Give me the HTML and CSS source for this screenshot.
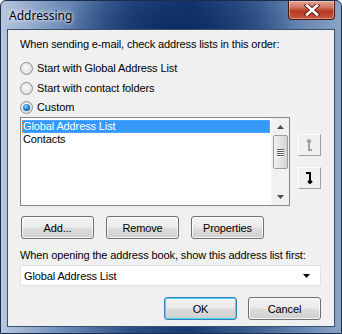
FILE: index.html
```html
<!doctype html>
<html>
<head>
  <meta charset="utf-8"/>
  <title>Addressing</title>
  <link rel="stylesheet" href="styles.css">
</head>
<body>
  <div class="window">
    <div class="titlebar">
      <span class="title">Addressing</span>
      <div class="close">
        <svg width="16" height="12" viewBox="0 0 16 12">
          <path d="M3 1.5 L13 10.5 M13 1.5 L3 10.5" stroke="#5b1a12" stroke-width="4.4" stroke-linecap="square"/>
          <path d="M3 1.5 L13 10.5 M13 1.5 L3 10.5" stroke="#fff" stroke-width="2.6" stroke-linecap="square"/>
        </svg>
      </div>
    </div>
    <div class="client">
      <div class="label first">When sending e-mail, check address lists in this order:</div>
      <div class="radios">
        <div class="radio"><span class="dot"></span>Start with Global Address List</div>
        <div class="radio"><span class="dot"></span>Start with contact folders</div>
        <div class="radio"><span class="dot on"></span>Custom</div>
      </div>
      <div class="listrow">
        <div class="listbox">
          <div class="items">
            <div class="item sel">Global Address List</div>
            <div class="item">Contacts</div>
          </div>
          <div class="scrollbar">
            <div class="arrow">
              <svg width="7" height="4" viewBox="0 0 7 4"><path d="M0 4 L3.5 0 L7 4Z" fill="#4d4d4d"/></svg>
            </div>
            <div class="thumb">
              <span></span><span></span><span></span><span></span>
            </div>
            <div class="track"></div>
            <div class="arrow">
              <svg width="7" height="4" viewBox="0 0 7 4"><path d="M0 0 L3.5 4 L7 0Z" fill="#4d4d4d"/></svg>
            </div>
          </div>
        </div>
        <div class="movers">
          <div class="mover">
            <svg width="9" height="12" viewBox="0 0 9 12">
              <path d="M4 1 L4 11 L7 11 M2 3 L4 1 L6 3" fill="none" stroke="#a0a0a0" stroke-width="2"/>
            </svg>
          </div>
          <div class="mover">
            <svg width="9" height="12" viewBox="0 0 9 12">
              <path d="M1 1 L5 1 L5 11 M3 9 L5 11 L7 9" fill="none" stroke="#000" stroke-width="2"/>
            </svg>
          </div>
        </div>
      </div>
      <div class="buttons">
        <div class="btn">Add...</div>
        <div class="btn">Remove</div>
        <div class="btn">Properties</div>
      </div>
      <div class="label">When opening the address book, show this address list first:</div>
      <div class="combo">
        <span>Global Address List</span>
        <svg width="7" height="4" viewBox="0 0 7 4"><path d="M0 0 L3.5 4 L7 0Z" fill="#000"/></svg>
      </div>
      <div class="footer">
        <div class="btn default">OK</div>
        <div class="btn">Cancel</div>
      </div>
    </div>
  </div>
</body>
</html>
```

FILE: styles.css
```css
html, body {
  margin: 0;
  padding: 0;
  background: #fff;
}
.window {
  width: 342px;
  height: 334px;
  box-sizing: border-box;
  border: 1px solid #1a2d4c;
  border-radius: 6px 6px 0 0;
  background:
    radial-gradient(ellipse 120px 60px at 52% 10%, #0d2a62 0%, rgba(13,42,98,0) 100%),
    linear-gradient(90deg, #b7c8de 0%, #6d8cb8 18%, #2c4f86 38%, #183a74 55%, #3e6193 75%, #8aa4c8 100%);
  display: flex;
  flex-direction: column;
  padding: 0 6px 6px 6px;
  font-family: "Liberation Sans", Arial, sans-serif;
  font-size: 11px;
  letter-spacing: -0.12px;
  color: #000;
}
.titlebar {
  height: 28px;
  display: flex;
  align-items: flex-start;
  justify-content: space-between;
}
.title {
  font-family: "Noto Sans", sans-serif;
  font-size: 12px;
  letter-spacing: 0;
  margin-top: 6px;
  margin-left: 2px;
  color: #000;
  text-shadow: 0 0 6px rgba(255,255,255,0.9), 0 0 3px rgba(255,255,255,0.9);
}
.close {
  width: 47px;
  height: 19px;
  box-sizing: border-box;
  border: 1px solid #4a1b14;
  border-top: none;
  border-radius: 0 0 4px 4px;
  background: linear-gradient(#e3a394 0%, #d37562 35%, #b73a23 55%, #c8573c 100%);
  display: flex;
  align-items: center;
  justify-content: center;
  box-shadow: inset 0 0 0 1px rgba(255,255,255,0.35);
}
.client {
  flex: 1;
  border: 1px solid #39506f;
  background: #f0f0f0;
  padding: 7px 12px 0 12px;
  display: flex;
  flex-direction: column;
}
.label {
  height: 14px;
  line-height: 14px;
}
.radios {
  margin-top: 11px;
  display: flex;
  flex-direction: column;
  gap: 6.5px;
}
.radio {
  display: flex;
  align-items: center;
  height: 13px;
  line-height: 13px;
}
.dot {
  width: 11px;
  height: 11px;
  border: 1px solid #8e8f8f;
  border-radius: 50%;
  background: radial-gradient(circle at 45% 40%, #fbfbfb 0%, #e3e3e3 60%, #c8c8c8 100%);
  margin-right: 4px;
  position: relative;
}
.dot.on::after {
  content: "";
  position: absolute;
  left: 2px;
  top: 2px;
  width: 7px;
  height: 7px;
  border-radius: 50%;
  background: radial-gradient(circle at 40% 35%, #8fd3ff 0%, #1a74c4 55%, #0c3e7a 100%);
}
.listrow {
  margin-top: 3px;
  display: flex;
}
.listbox {
  width: 268px;
  height: 87px;
  border: 1px solid #828790;
  background: #fff;
  display: flex;
}
.items {
  flex: 1;
  padding: 2px 1px 0 1px;
}
.item {
  height: 13px;
  line-height: 13px;
  padding-left: 1px;
}
.item.sel {
  background: #3399ff;
  color: #fff;
  outline: 1px dotted #ff9900;
  outline-offset: -1px;
}
.scrollbar {
  width: 17px;
  background: #f1f1f1;
  display: flex;
  flex-direction: column;
  border-left: 1px solid #f7f7f7;
}
.arrow {
  height: 17px;
  display: flex;
  align-items: center;
  justify-content: center;
}
.thumb {
  height: 32px;
  margin: 0 1px;
  border: 1px solid #9c9c9c;
  border-radius: 2px;
  background: linear-gradient(90deg, #f3f3f3, #e2e2e2 50%, #d4d4d4);
  display: flex;
  flex-direction: column;
  align-items: center;
  justify-content: center;
  gap: 1px;
}
.thumb span {
  width: 7px;
  height: 1px;
  background: #5c5c5c;
  box-shadow: 0 1px 0 #fff;
}
.track {
  flex: 1;
}
.movers {
  margin-left: 8px;
  padding-top: 17px;
  display: flex;
  flex-direction: column;
  gap: 11px;
}
.mover {
  width: 23px;
  height: 22px;
  box-sizing: border-box;
  border: 1px solid;
  border-color: #fff #a0a0a0 #a0a0a0 #fff;
  background: #f0f0f0;
  display: flex;
  align-items: center;
  justify-content: center;
}
.buttons {
  margin-top: 10px;
  display: flex;
  gap: 12px;
  padding-left: 1px;
}
.btn {
  width: 73px;
  height: 23px;
  box-sizing: border-box;
  border: 1px solid #707070;
  border-radius: 3px;
  background: linear-gradient(#f2f2f2 0%, #ebebeb 48%, #dddddd 52%, #cfcfcf 100%);
  box-shadow: inset 0 0 0 1px rgba(255,255,255,0.8);
  display: flex;
  align-items: center;
  justify-content: center;
}
.buttons + .label {
  margin-top: 9px;
}
.combo {
  margin-top: 3px;
  width: 301px;
  height: 21px;
  box-sizing: border-box;
  border: 1px solid #e0e0e0;
  border-radius: 2px;
  background: #fff;
  display: flex;
  align-items: center;
  justify-content: space-between;
  padding: 0 10px 0 3px;
}
.footer {
  margin-top: 11px;
  display: flex;
  justify-content: flex-end;
  gap: 11px;
  padding-right: 1px;
}
.btn.default {
  border-color: #3c7fb1;
  box-shadow: inset 0 0 0 1px #48d7fb;
}
```
